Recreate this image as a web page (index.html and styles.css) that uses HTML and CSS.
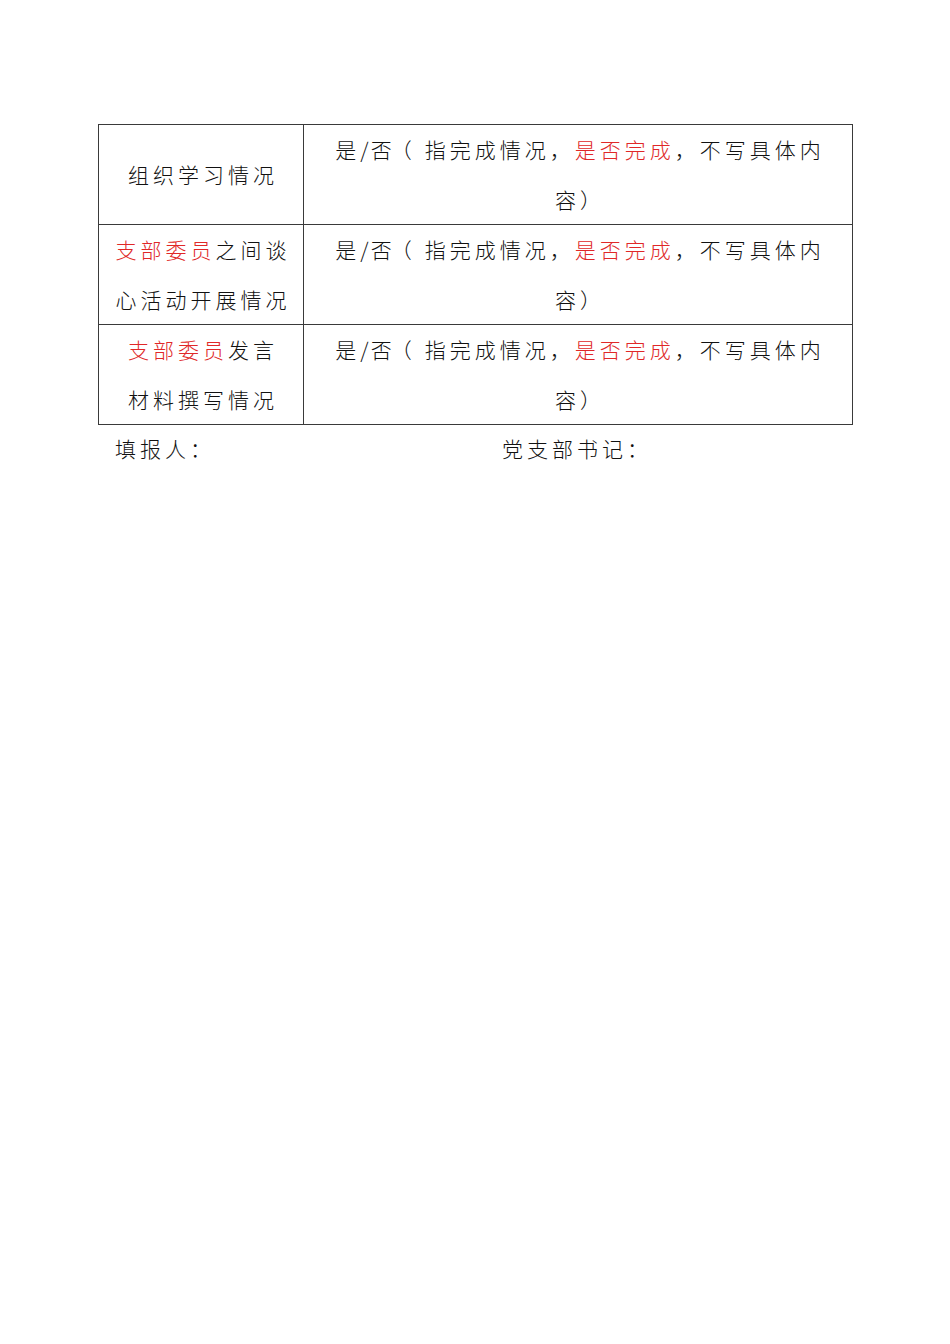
FILE: index.html
```html
<!DOCTYPE html>
<html lang="zh">
<head>
<meta charset="utf-8">
<link rel="stylesheet" href="styles.css">
</head>
<body>
<div class="page">
  <table class="report">
    <colgroup><col class="c1"><col class="c2"></colgroup>
    <tr>
      <td class="label">组织学习情况</td>
      <td class="value">是<span class="slash">/</span>否<span class="paren">（</span>指完成情况，<span class="red">是否完成</span>，不写具体内容）</td>
    </tr>
    <tr>
      <td class="label"><span class="red">支部委员</span>之间谈<br>心活动开展情况</td>
      <td class="value">是<span class="slash">/</span>否<span class="paren">（</span>指完成情况，<span class="red">是否完成</span>，不写具体内容）</td>
    </tr>
    <tr>
      <td class="label"><span class="red">支部委员</span>发言<br>材料撰写情况</td>
      <td class="value">是<span class="slash">/</span>否<span class="paren">（</span>指完成情况，<span class="red">是否完成</span>，不写具体内容）</td>
    </tr>
  </table>
  <div class="sign">
    <div class="sign-a">填报人：</div>
    <div class="sign-b">党支部书记：</div>
  </div>
</div>
</body>
</html>
```

FILE: styles.css
```css
html, body {
  margin: 0;
  padding: 0;
  background: #ffffff;
}
body {
  font-family: "Noto Sans CJK SC", "Noto Sans", sans-serif;
  font-weight: 300;
  color: #111;
}
.page {
  padding: 124px 98px 0 98px;
}
.report {
  width: 754px;
  border-collapse: collapse;
  table-layout: fixed;
}
.c1 { width: 205px; }
.c2 { width: 549px; }
.report td {
  border: 1px solid #3a3a3a;
  height: 99px;
  padding: 0;
  font-size: 21px;
  line-height: 49.5px;
  letter-spacing: 4px;
  text-align: center;
  box-sizing: border-box;
}
.report td.label {
  vertical-align: middle;
  padding: 0 4px 0 8px;
}
.report td.value {
  vertical-align: top;
  padding: 0 22px 0 26px;
}
.slash {
  letter-spacing: 2px;
}
.paren {
  margin-left: -5px;
  margin-right: 9px;
}
.red {
  color: #e02828;
}
.sign {
  display: flex;
  font-size: 21px;
  line-height: 50px;
  letter-spacing: 4px;
  margin-top: -2px;
}
.sign-a {
  width: 387px;
  padding-left: 17px;
}
```
